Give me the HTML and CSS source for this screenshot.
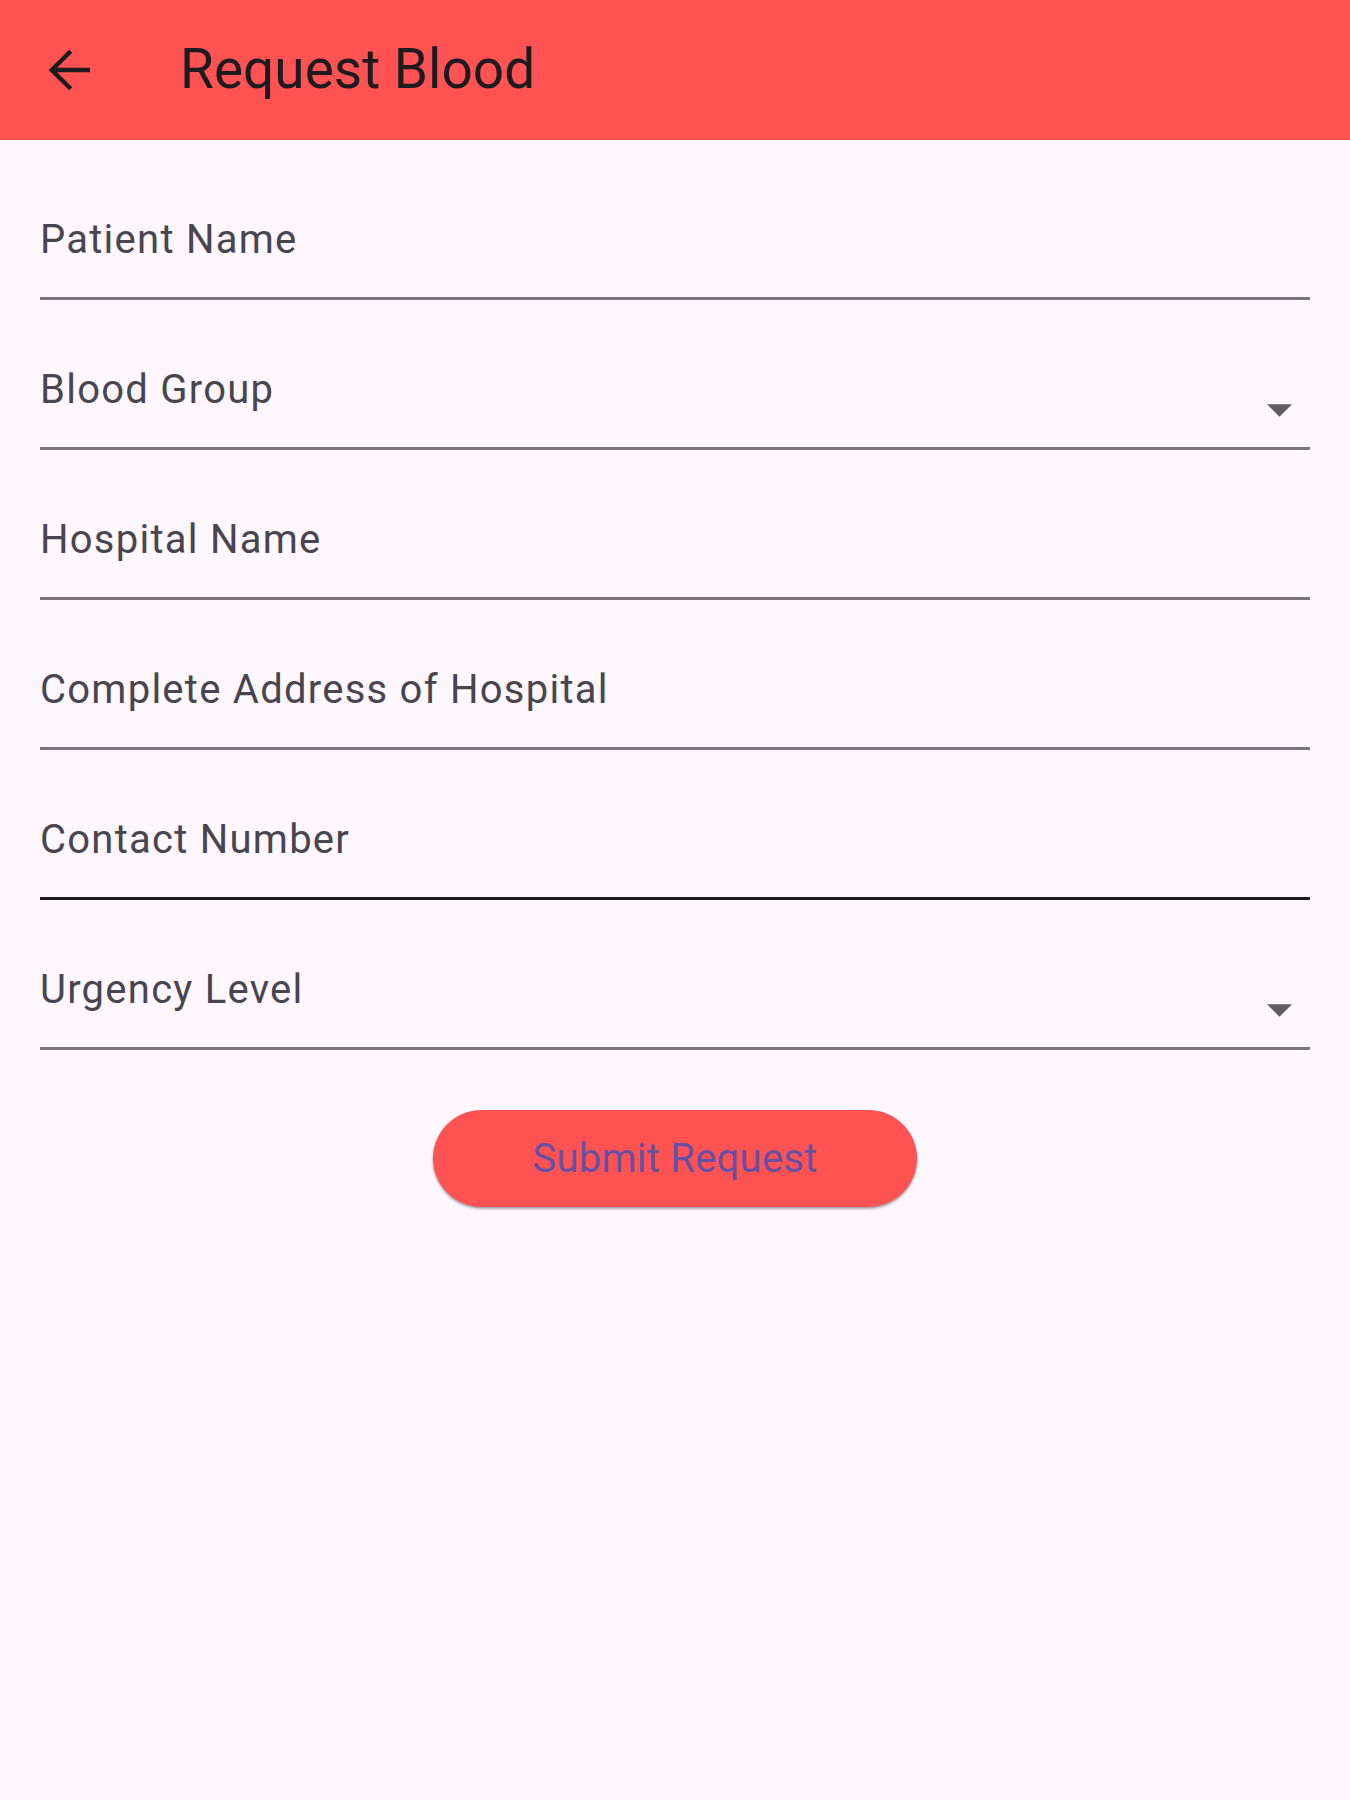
FILE: index.html
```html
<!DOCTYPE html>
<html lang="en">
<head>
<meta charset="utf-8">
<title>Request Blood</title>
<link rel="stylesheet" href="styles.css">
</head>
<body>
<header class="appbar">
  <div class="back">
    <svg width="60" height="60" viewBox="0 0 24 24" aria-hidden="true">
      <path d="M12.3 4.5 4.7 12l7.6 7.5M4.7 12H20" fill="none" stroke="#1d1b20" stroke-width="1.75"/>
    </svg>
  </div>
  <h1 class="title">Request Blood</h1>
</header>
<main class="form">
  <div class="field"><span class="label">Patient Name</span></div>
  <div class="field"><span class="label">Blood Group</span>
    <svg class="drop" width="25" height="13" viewBox="0 0 10 5" aria-hidden="true"><path d="M0 0h10L5 5z" fill="#605d64"/></svg>
  </div>
  <div class="field"><span class="label">Hospital Name</span></div>
  <div class="field"><span class="label">Complete Address of Hospital</span></div>
  <div class="field field-active"><span class="label">Contact Number</span></div>
  <div class="field"><span class="label">Urgency Level</span>
    <svg class="drop" width="25" height="13" viewBox="0 0 10 5" aria-hidden="true"><path d="M0 0h10L5 5z" fill="#605d64"/></svg>
  </div>
  <div class="actions">
    <button class="submit" type="button">Submit Request</button>
  </div>
</main>
</body>
</html>
```
FILE: styles.css
```css
html, body {
  margin: 0;
  padding: 0;
  background: #fef7ff;
}
body {
  font-family: Roboto, "Liberation Sans", sans-serif;
  min-height: 1800px;
}
.appbar {
  height: 140px;
  background: #ff5252;
  display: flex;
  align-items: center;
}
.back {
  width: 140px;
  height: 140px;
  display: flex;
  align-items: center;
  justify-content: center;
}
.back svg { display: block; }
.title {
  margin: 0 0 2px 40px;
  font-size: 55px;
  font-weight: 400;
  color: #1d1b20;
  line-height: 64px;
}
.form {
  padding: 10px 40px 0;
  display: flex;
  flex-direction: column;
}
.field {
  display: flex;
  align-items: flex-end;
  padding-top: 66px;
  padding-bottom: 33px;
  border-bottom: 3px solid #79747e;
}
.field-active {
  border-bottom-color: #1d1b20;
}
.label {
  flex: 1;
  font-size: 40px;
  line-height: 48px;
  letter-spacing: 1.25px;
  color: #49454f;
}
.drop {
  display: block;
  margin: 0 18px -3px 0;
}
.actions {
  display: flex;
  justify-content: center;
  padding-top: 60px;
}
.submit {
  width: 484px;
  height: 97px;
  border: none;
  border-radius: 49px;
  background: #ff5252;
  color: #6750a4;
  font-family: Roboto, "Liberation Sans", sans-serif;
  font-size: 40px;
  font-weight: 400;
  letter-spacing: 0.25px;
  box-shadow: 0 2px 3px rgba(0,0,0,0.28), 0 1px 2px rgba(0,0,0,0.15);
  padding: 0;
}
```
